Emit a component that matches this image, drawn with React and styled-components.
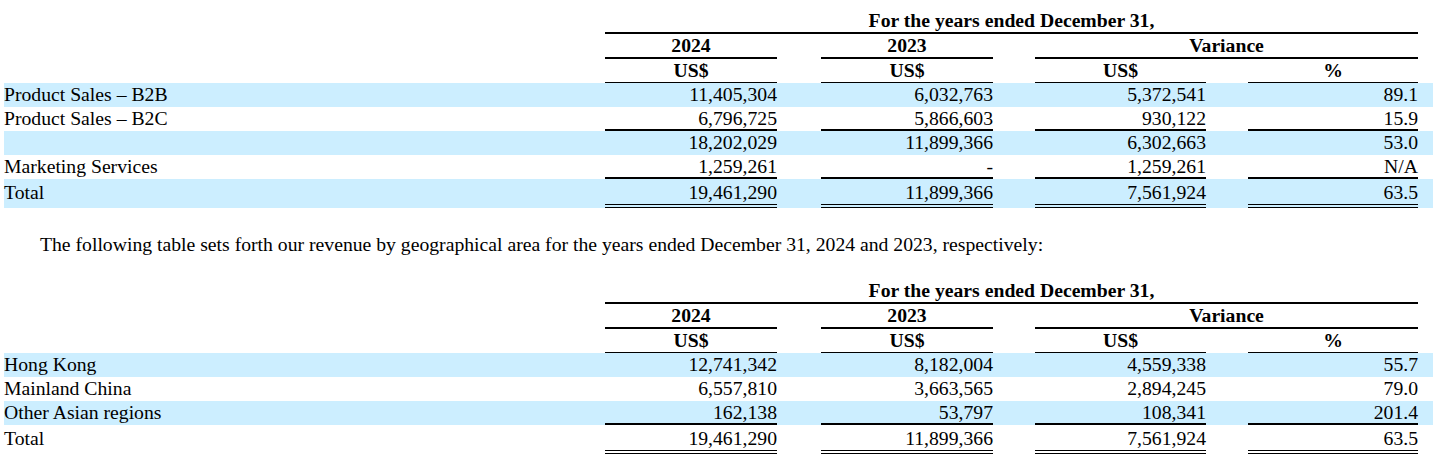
import React from "react";
import styled, { createGlobalStyle } from "styled-components";

const GlobalStyle = createGlobalStyle`
  body {
    margin: 0;
    background: #fff;
    color: #000;
    font-family: "Liberation Serif", "Times New Roman", serif;
  }
`;

// label | 2024 | gap | 2023 | gap | var US$ | gap | % | tail
const COLS = "601px 172px 44px 172px 42px 171px 42px 170px 15px";

const Page = styled.div`
  width: 1429px;
  padding: 8px 7px 0 4px;
`;

const Table = styled.div`
  display: flex;
  flex-direction: column;
`;

const Row = styled.div`
  display: grid;
  grid-template-columns: ${COLS};
  height: ${(p) => (p.$head ? 25 : p.$total ? 29 : 24)}px;
  background: ${(p) => (p.$shaded ? "#cceeff" : "transparent")};
  font-size: 19.7px;
  line-height: 22px;
`;

const Cell = styled.div`
  grid-column: ${(p) => p.$col} / span ${(p) => p.$span || 1};
  box-sizing: border-box;
  white-space: nowrap;
  text-align: ${(p) => p.$align || "right"};
  padding-top: ${(p) => (p.$total ? 2 : 0)}px;
  border-bottom: ${(p) =>
    p.$rule === "double" ? "4px double #000" : p.$rule ? "2px solid #000" : "none"};
`;

const HeadCell = styled(Cell)`
  font-weight: bold;
  text-align: center;
  line-height: 23px;
  padding-top: 1px;
`;

const Note = styled.p`
  margin: 25px 0 23px 36px;
  font-size: 19.7px;
  line-height: 22px;
`;

const table1 = [
  { label: "Product Sales – B2B", v: ["11,405,304", "6,032,763", "5,372,541", "89.1"] },
  { label: "Product Sales – B2C", v: ["6,796,725", "5,866,603", "930,122", "15.9"], rule: true },
  { label: "", v: ["18,202,029", "11,899,366", "6,302,663", "53.0"] },
  { label: "Marketing Services", v: ["1,259,261", "-", "1,259,261", "N/A"], rule: true },
  { label: "Total", v: ["19,461,290", "11,899,366", "7,561,924", "63.5"], total: true },
];

const table2 = [
  { label: "Hong Kong", v: ["12,741,342", "8,182,004", "4,559,338", "55.7"] },
  { label: "Mainland China", v: ["6,557,810", "3,663,565", "2,894,245", "79.0"] },
  { label: "Other Asian regions", v: ["162,138", "53,797", "108,341", "201.4"], rule: true },
  { label: "Total", v: ["19,461,290", "11,899,366", "7,561,924", "63.5"], total: true },
];

const VALUE_COLS = [2, 4, 6, 8];

function Header() {
  return (
    <>
      <Row $head>
        <HeadCell $col={2} $span={7} $rule>
          For the years ended December 31,
        </HeadCell>
      </Row>
      <Row $head>
        <HeadCell $col={2} $rule>2024</HeadCell>
        <HeadCell $col={4} $rule>2023</HeadCell>
        <HeadCell $col={6} $span={3} $rule>Variance</HeadCell>
      </Row>
      <Row $head>
        <HeadCell $col={2} $rule>US$</HeadCell>
        <HeadCell $col={4} $rule>US$</HeadCell>
        <HeadCell $col={6} $rule>US$</HeadCell>
        <HeadCell $col={8} $rule>%</HeadCell>
      </Row>
    </>
  );
}

function RevenueTable({ rows, shadeTotal }) {
  return (
    <Table>
      <Header />
      {rows.map((r, i) => {
        const shaded = r.total ? shadeTotal : i % 2 === 0;
        return (
          <Row key={i} $shaded={shaded} $total={r.total}>
            <Cell $col={1} $align="left" $total={r.total}>
              {r.label}
            </Cell>
            {r.v.map((val, j) => (
              <Cell
                key={j}
                $col={VALUE_COLS[j]}
                $total={r.total}
                $rule={r.total ? "double" : r.rule}
              >
                {val}
              </Cell>
            ))}
          </Row>
        );
      })}
    </Table>
  );
}

export default function App() {
  return (
    <Page>
      <GlobalStyle />
      <RevenueTable rows={table1} shadeTotal />
      <Note>
        The following table sets forth our revenue by geographical area for the years ended
        December 31, 2024 and 2023, respectively:
      </Note>
      <RevenueTable rows={table2} shadeTotal={false} />
    </Page>
  );
}
